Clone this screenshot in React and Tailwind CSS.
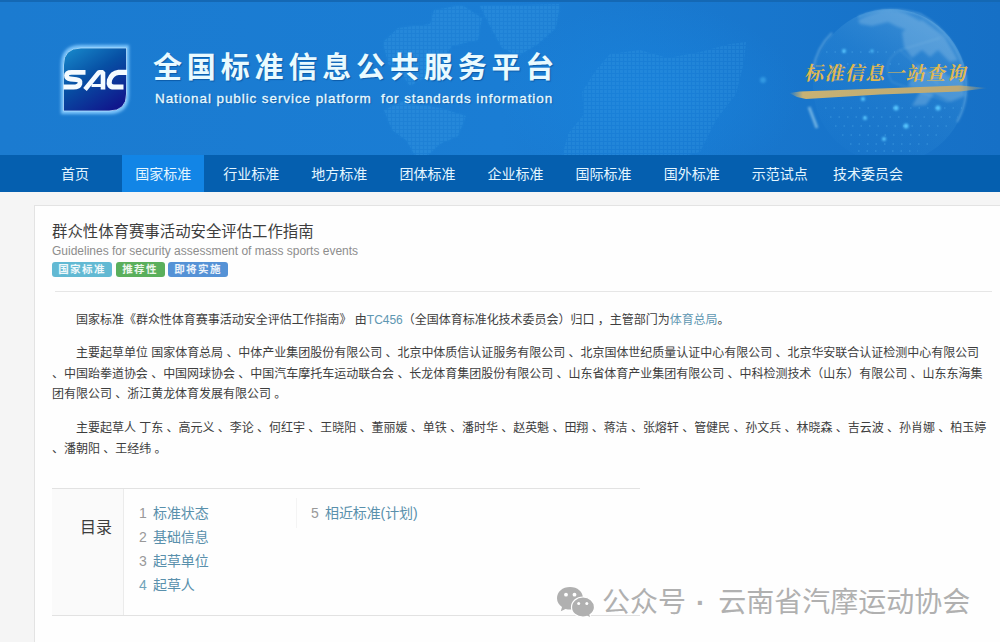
const NAV = ['首页', '国家标准', '行业标准', '地方标准', '团体标准', '企业标准', '国际标准', '国外标准', '示范试点', '技术委员会']

const ORG_LINES = [
  '主要起草单位 国家体育总局 、中体产业集团股份有限公司 、北京中体质信认证服务有限公司 、北京国体世纪质量认证中心有限公司 、北京华安联合认证检测中心有限公司',
  '、中国跆拳道协会 、中国网球协会 、中国汽车摩托车运动联合会 、长龙体育集团股份有限公司 、山东省体育产业集团有限公司 、中科检测技术（山东）有限公司 、山东东海集',
  '团有限公司 、浙江黄龙体育发展有限公司 。',
]

const PEOPLE_LINES = [
  '主要起草人 丁东 、高元义 、李论 、何红宇 、王晓阳 、董丽媛 、单铁 、潘时华 、赵英魁 、田翔 、蒋洁 、张熔轩 、管健民 、孙文兵 、林晓森 、吉云波 、孙肖娜 、柏玉婷',
  '、潘朝阳 、王经纬 。',
]

const TOC = ['标准状态', '基础信息', '起草单位', '起草人']

function SacLogo() {
  return (
    <svg width="84" height="84" viewBox="0 0 84 84" className="block shrink-0">
      <defs>
        <linearGradient id="sac" x1="0.1" y1="0" x2="0.75" y2="1">
          <stop offset="0" stopColor="#1787ca" />
          <stop offset="0.45" stopColor="#0750a4" />
          <stop offset="1" stopColor="#10168c" />
        </linearGradient>
        <filter id="glow" x="-20%" y="-20%" width="140%" height="140%">
          <feGaussianBlur stdDeviation="1.600" />
        </filter>
      </defs>
      <path d="M27 9H73V56Q73 74 55 74H9V27Q9 9 27 9Z" fill="#7cc4fb" stroke="#7cc4fb" strokeWidth="4" filter="url(#glow)" />
      <path d="M27 10H72.500V56Q72.500 73 55 73H9.500V27Q9.500 10 27 10Z" fill="url(#sac)" stroke="#b5e0ff" strokeWidth="0.8" />
      <g fill="none" stroke="#f4fbff">
        <path d="M31.500 34.300H17.500Q12.500 34.300 12.500 37.500Q12.500 40.500 16.500 41L22.500 41.700Q27 42.300 26 45.500Q25 49 19.500 49H9.500" strokeWidth="4.800" />
        <path d="M31 51.500L45 34.300H49V51.500" strokeWidth="4.600" strokeLinejoin="bevel" />
        <path d="M37.500 47.500H48" strokeWidth="3" />
        <path d="M73 34.300H64.500Q58 35 55.500 42Q54 49 60 49H69.500" strokeWidth="5.200" />
      </g>
    </svg>
  )
}

// Dotted continents and the globe behind the header text
function HeaderArt() {
  return (
    <svg width="1000" height="153" viewBox="0 0 1000 153" className="absolute inset-0">
      <defs>
        <pattern id="dots" width="4" height="4" patternUnits="userSpaceOnUse">
          <rect width="3" height="3" fill="#49aef0" />
        </pattern>
        <radialGradient id="haze" cx="0.5" cy="0.5" r="0.5">
          <stop offset="0" stopColor="#1a8ae4" stopOpacity="0.5" />
          <stop offset="1" stopColor="#1a8ae4" stopOpacity="0" />
        </radialGradient>
        <linearGradient id="ball" x1="0.75" y1="0" x2="0.2" y2="0.9">
          <stop offset="0" stopColor="#8cc8ef" stopOpacity="0.36" />
          <stop offset="0.45" stopColor="#49a0e0" stopOpacity="0.2" />
          <stop offset="1" stopColor="#2f90dd" stopOpacity="0.06" />
        </linearGradient>
        <linearGradient id="gold" x1="0" y1="0" x2="1" y2="0">
          <stop offset="0" stopColor="#c8b273" stopOpacity="0" />
          <stop offset="0.07" stopColor="#c8b273" />
          <stop offset="0.85" stopColor="#bca974" />
          <stop offset="1" stopColor="#bca974" stopOpacity="0" />
        </linearGradient>
        <filter id="soft"><feGaussianBlur stdDeviation="0.8" /></filter>
        <filter id="band" x="-5%" y="-50%" width="110%" height="200%"><feGaussianBlur stdDeviation="0.7" /></filter>
        <filter id="land"><feGaussianBlur stdDeviation="1.500" /></filter>
      </defs>
      <ellipse cx="650" cy="95" rx="150" ry="95" fill="url(#haze)" />
      <g fill="url(#dots)" opacity="0.16" filter="url(#land)">
        <path d="M383 40L398 26L430 22L434 8L462 3L482 16L478 38L452 44L440 62L424 76L410 84L400 70L388 62Z" />
        <path d="M480 4L560 2L556 26L538 42L518 54L502 46L490 24Z" />
        <path d="M384 108L402 100L440 106L466 114L458 134L440 142L426 155H416L406 138L392 128Z" />
      </g>
      <g fill="url(#dots)" opacity="0.17">
        <path d="M383 40L398 26L430 22L434 8L462 3L482 16L478 38L452 44L440 62L424 76L410 84L400 70L388 62Z" />
        <path d="M480 4L560 2L556 26L538 42L518 54L502 46L490 24Z" />
        <path d="M384 108L402 100L440 106L466 114L458 134L440 142L426 155H416L406 138L392 128Z" />
        <path d="M596 68L610 52L640 48L668 56L700 50L730 42L746 40L744 60L736 92L716 118L700 150L680 155H562L568 132L584 112L582 90Z" />
      </g>
      <circle cx="890" cy="84" r="77" fill="url(#ball)" />
      <g fill="none" stroke="#83bfe9" filter="url(#soft)">
        <path d="M813 68Q817 45 832 31" strokeWidth="2" opacity="0.5" />
        <path d="M809 105L817 126" strokeWidth="3" opacity="0.8" />
        <path d="M858 15Q887 2 920 12Q956 32 966 74Q969 100 957 120" strokeWidth="1.500" opacity="0.5" />
        <path d="M892 80Q880 60 900 48L940 36M892 80L948 100M900 48L938 82" strokeWidth="0.7" opacity="0.5" />
      </g>
      <g fill="#a9d2ee" opacity="0.3" filter="url(#land)">
        <path d="M858 18Q885 3 905 11L922 20L912 30L898 25L888 20L872 24L860 22Z" />
        <path d="M902 30L922 18L944 34L958 58L950 60L938 48L930 55L922 48L912 56L904 45Z" />
        <path d="M918 62L928 68L940 66L948 74L963 76L965 94L950 100L934 92L926 103L912 104L920 90L908 84Z" />
      </g>
      <g fill="none" stroke="#58b5ef" strokeWidth="1" strokeDasharray="1.5 7" opacity="0.5">
        <path d="M826 50H895M830 62H900M825 106H962M830 115H958M835 124H954M842 133H943M850 142H930M858 149H918" />
      </g>
      <g fill="#59c7ff" filter="url(#soft)">
        <circle cx="844" cy="49" r="2" /><circle cx="872" cy="49" r="1.500" />
        <circle cx="863" cy="97" r="2" />
        <circle cx="896" cy="106" r="2.500" /><circle cx="938" cy="106" r="2.500" />
        <circle cx="865" cy="116" r="2" /><circle cx="906" cy="124" r="2.500" />
        <circle cx="884" cy="137" r="2" /><circle cx="763" cy="78" r="3" opacity="0.4" />
      </g>
      <path d="M789 91L800 89.500L960 83.500L988 86L960 89.500L880 92.500L806 97L797 95Z" fill="url(#gold)" filter="url(#band)" />
    </svg>
  )
}

function Badge({ className, children }) {
  return (
    <span className={`flex h-[15px] items-center justify-center rounded-[3px] text-[10.5px] font-bold tracking-[1.4px] text-white/90 ${className}`}>
      {children}
    </span>
  )
}

function TocItem({ n, children, active }) {
  return (
    <li className="flex h-6 items-center">
      <span className={`w-[14px] ${active ? 'text-[#6fa3ba]' : 'text-[#999]'}`}>{n}</span>
      <a className="text-[#5990ac]">{children}</a>
    </li>
  )
}

function WechatIcon() {
  return (
    <svg width="40" height="34" viewBox="0 0 40 34" className="block">
      <g fill="#b0b0b0">
        <path d="M14 1C6.500 1 1 5.700 1 12.300C1 16 3 19 6 21L4.800 25.300L9.500 22.900Q11.700 23.600 14.500 23.600C21.500 23.600 27 18.600 27 12.300C27 5.700 21.500 1 14 1Z" />
        <path d="M27 11C20.500 11 15.500 15.500 15.500 21.200C15.500 27 20.500 31 27 31Q29.300 31 31.200 30.300L35 32L34 28.700C36.700 26.900 38.500 24.200 38.500 21.200C38.500 15.500 33.500 11 27 11Z" stroke="#fff" strokeWidth="1.200" />
      </g>
      <g fill="#fff">
        <circle cx="10" cy="8.700" r="1.900" /><circle cx="18.500" cy="8.700" r="1.900" />
        <circle cx="22.700" cy="17.600" r="1.500" /><circle cx="30.800" cy="17.600" r="1.500" />
      </g>
    </svg>
  )
}

export default function App() {
  return (
    <div className="relative flex h-[642px] w-[1000px] flex-col overflow-hidden bg-[#f5f5f5] font-['Liberation_Sans','Noto_Sans_CJK_SC',sans-serif] text-[#3d3d3d]">
      {/* Header */}
      <header className="relative h-[155px] shrink-0 border-t-2 border-[#1468b4] bg-linear-to-r from-[#1b7bd0] via-[#1a7dd4] to-[#1670c6]">
        <HeaderArt />
        <div className="relative flex pt-[36px] pl-[54px]">
          <SacLogo />
          <div className="pt-[11px] pl-[15px] whitespace-nowrap text-[#e9faff] [text-shadow:1px_1px_1px_#0d5ba8]">
            <h1 className="text-[29px] leading-[39px] font-bold tracking-[4.85px]">全国标准信息公共服务平台</h1>
            <p className="pl-[2px] text-[13.5px] leading-[21px] tracking-[0.91px] whitespace-pre [-webkit-text-stroke:0.3px_#e9faff]">National public service platform  for standards information</p>
          </div>
        </div>
        <p className="absolute top-[56px] left-[806px] -skew-x-12 font-['Noto_Serif_CJK_SC','Noto_Sans_CJK_SC',serif] text-[19px] leading-[28px] font-bold tracking-[1.3px] whitespace-nowrap text-[#e0b850]">标准信息一站查询</p>
      </header>

      {/* Navigation */}
      <nav className="flex h-[37px] shrink-0 bg-[#055faf] pl-[31px] text-sm text-[#e4f6ff]">
        {NAV.map((item, i) => (
          <a key={item} className="flex w-[88.1px] shrink-0 justify-center">
            <span className={`flex items-center justify-center whitespace-nowrap ${i === 1 ? 'w-[82px] bg-[#1285e6]' : ''}`}>{item}</span>
          </a>
        ))}
      </nav>

      {/* Standard details */}
      <main className="mt-[13px] ml-[34px] grow border-t border-l border-[#e3e3e3] bg-[#fefefe] pl-[17px]">
        <h2 className="pt-[15px] text-[15.4px] leading-[21px]">群众性体育赛事活动安全评估工作指南</h2>
        <p className="text-xs leading-[18px] text-[#8d8d8d]">Guidelines for security assessment of mass sports events</p>
        <div className="mt-[2px] flex gap-[3.5px]">
          <Badge className="w-[60px] bg-[#62b9d3]">国家标准</Badge>
          <Badge className="w-[49px] bg-[#5aaf5c]">推荐性</Badge>
          <Badge className="w-[60px] bg-[#5592d6]">即将实施</Badge>
        </div>
        <hr className="mt-[14px] mr-2 ml-[3px] border-[#e6e6e6]" />

        <div className="pt-[18px] text-xs leading-[20.8px] tracking-[-0.02px] whitespace-nowrap">
          <p className="indent-6">
            国家标准《群众性体育赛事活动安全评估工作指南》 由<a className="text-[#5e97b2]">TC456</a>（全国体育标准化技术委员会）归口 ，主管部门为<a className="text-[#5e97b2]">体育总局</a>。
          </p>
          <p className="mt-3 indent-6">
            {ORG_LINES.map((line) => <span key={line}>{line}<br /></span>)}
          </p>
          <p className="mt-[12.6px] indent-6">
            {PEOPLE_LINES.map((line) => <span key={line}>{line}<br /></span>)}
          </p>
        </div>

        <section className="mt-[28.4px] flex h-[128px] w-[588px] border-y border-[#e2e2e2]">
          <h3 className="w-[72px] border-r border-[#ebebeb] bg-[#fafafa] pt-[28px] pl-[28px] text-[16px] leading-[22px]">目录</h3>
          <ul className="w-[172px] pt-[12px] pl-[15px] text-sm tracking-[-0.1px]">
            {TOC.map((item, i) => <TocItem key={item} n={i + 1} active={i === 3}>{item}</TocItem>)}
          </ul>
          <ul className="mt-[9px] h-[30px] border-l border-[#f4f4f4] pt-[3px] pl-[14px] text-sm tracking-[-0.1px]">
            <TocItem n={5}>相近标准(计划)</TocItem>
          </ul>
        </section>
      </main>

      {/* Account watermark */}
      <div className="absolute top-[580px] left-[556px] flex items-center gap-[6px] whitespace-nowrap text-[#b0b0b0]">
        <WechatIcon />
        <span className="pt-px text-[28px] leading-[44px]">公众号<span className="pr-[13px] pl-[10px] font-bold">·</span>云南省汽摩运动协会</span>
      </div>
    </div>
  )
}
